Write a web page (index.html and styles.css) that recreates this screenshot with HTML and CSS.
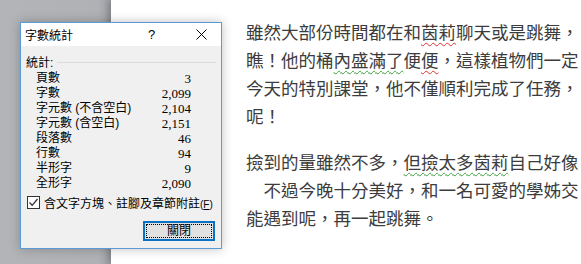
FILE: index.html
```html
<!DOCTYPE html>
<html lang="zh-Hant">

<head>
    <meta charset="UTF-8">
    <meta name="viewport" content="width=device-width, initial-scale=1.0">
    <title>字數統計</title>

    <link rel="stylesheet" href="styles.css">
</head>

<body>

    <div class="workspace">

        <aside class="gutter"></aside>

        <main class="page">

            <p class="para">
                <span class="line">雖然大部份時間都在和<span class="spell">茵莉</span>聊天或是跳舞，</span>
                <span class="line">瞧！他的桶<span class="grammar">內盛滿了</span>便<span class="spell">便</span>，這樣植物們一定</span>
                <span class="line">今天的特別課堂，他不僅順利完成了任務，</span>
                <span class="line">呢！</span>
            </p>

            <p class="para">
                <span class="line">撿到的量雖然不多，<span class="grammar">但撿太多茵莉</span>自己好像</span>
                <span class="line">　不過今晚十分美好，和一名可愛的學姊交</span>
                <span class="line">能遇到呢，再一起跳舞。</span>
            </p>

        </main>

    </div>

    <!-- 字數統計對話框 -->
    <section class="dialog">

        <header class="titlebar">
            <span class="title">字數統計</span>
            <span class="help">?</span>
            <span class="close">
                <svg width="11" height="11" viewBox="0 0 11 11">
                    <path d="M0.5 0.5 L10.5 10.5 M10.5 0.5 L0.5 10.5" stroke="#000" stroke-width="1" fill="none" />
                </svg>
            </span>
        </header>

        <div class="content">

            <div class="group">
                <span>統計:</span>
                <span class="rule"></span>
            </div>

            <ul class="stats">
                <li><span>頁數</span><span>3</span></li>
                <li><span>字數</span><span>2,099</span></li>
                <li><span>字元數 (不含空白)</span><span>2,104</span></li>
                <li><span>字元數 (含空白)</span><span>2,151</span></li>
                <li><span>段落數</span><span>46</span></li>
                <li><span>行數</span><span>94</span></li>
                <li><span>半形字</span><span>9</span></li>
                <li><span>全形字</span><span>2,090</span></li>
            </ul>

            <label class="check">
                <span class="box">
                    <svg width="11" height="11" viewBox="0 0 11 11">
                        <path d="M1.5 5.5 L4.2 8.3 L9.5 2" stroke="#333" stroke-width="1.3" fill="none" />
                    </svg>
                </span>
                <span>含文字方塊、註腳及章節附註<span class="key">(<u>F</u>)</span></span>
            </label>

            <div class="actions">
                <button class="btn"><span class="focus">關閉</span></button>
            </div>

        </div>

    </section>

</body>

</html>
```

FILE: styles.css
```css
* {
    margin: 0;
    padding: 0;
    box-sizing: border-box;
}

body {
    width: 581px;
    height: 264px;
    overflow: hidden;
    font-family: "Noto Sans CJK TC", "Noto Sans", sans-serif;
}

.workspace {
    display: flex;
    height: 264px;
}

.gutter {
    width: 111px;
    flex: none;
    background: linear-gradient(to right, #b3b4b8 0, #b0b1b5 88%, #9fa0a5 100%);
}

.page {
    flex: 1;
    background-color: #fff;
    padding: 18px 0 0 135px;
    overflow: hidden;
    color: #3c3c3c;
    font-size: 17.5px;
    box-shadow: -3px 0 6px rgba(0, 0, 0, .18);
}

.para {
    margin-bottom: 18px;
}

.line {
    display: block;
    height: 28px;
    line-height: 28px;
    white-space: nowrap;
}

.spell {
    text-decoration: underline wavy #e03030;
    text-decoration-thickness: 1px;
    text-underline-offset: 3px;
}

.grammar {
    text-decoration: underline wavy #3aa03a;
    text-decoration-thickness: 1px;
    text-underline-offset: 3px;
}

/* dialog floats over the document */
.dialog {
    position: absolute;
    left: 20px;
    top: 22px;
    width: 202px;
    height: 227px;
    background-color: #f0f0f0;
    border: 1px solid #5b9bd5;
    box-shadow: 0 0 10px rgba(0, 0, 0, .25);
    color: #000;
    font-family: "Liberation Sans", "Noto Sans CJK TC", sans-serif;
    font-size: 12px;
    display: flex;
    flex-direction: column;
}

.titlebar {
    height: 23px;
    background-color: #fff;
    display: flex;
    align-items: center;
    padding-left: 4px;
}

.title {
    flex: 1;
}

.help {
    width: 12px;
    font-size: 13px;
    margin-right: 36px;
}

.close {
    display: flex;
    width: 11px;
    margin-right: 14px;
}

.content {
    padding: 6px 5px 0 5px;
    display: flex;
    flex-direction: column;
}

.group {
    display: flex;
    align-items: center;
    height: 18px;
    gap: 4px;
}

.rule {
    flex: 1;
    border-top: 1px solid #dcdcdc;
    margin-top: 2px;
}

.stats {
    list-style: none;
    padding: 1px 25px 0 10px;
}

.stats li {
    display: flex;
    justify-content: space-between;
    height: 15px;
    line-height: 15px;
}

.stats li span:last-child {
    font-family: "Liberation Serif", serif;
    font-size: 13px;
}

.check {
    display: flex;
    align-items: center;
    gap: 4px;
    margin-top: 4px;
    padding-left: 1px;
    height: 15px;
}

.box {
    width: 13px;
    height: 13px;
    border: 1px solid #333;
    background-color: #fff;
    display: flex;
    align-items: center;
    justify-content: center;
}

.key {
    font-size: 10px;
}

.actions {
    display: flex;
    justify-content: flex-end;
    padding-right: 1px;
    margin-top: 11px;
}

.btn {
    width: 72px;
    height: 20px;
    border: 2px solid #0a72c4;
    background-color: #e1e1e1;
    font-family: inherit;
    font-size: 12px;
    padding: 1px;
    display: flex;
}

.focus {
    flex: 1;
    border: 1px dotted #000;
    line-height: 12px;
    text-align: center;
}
```
